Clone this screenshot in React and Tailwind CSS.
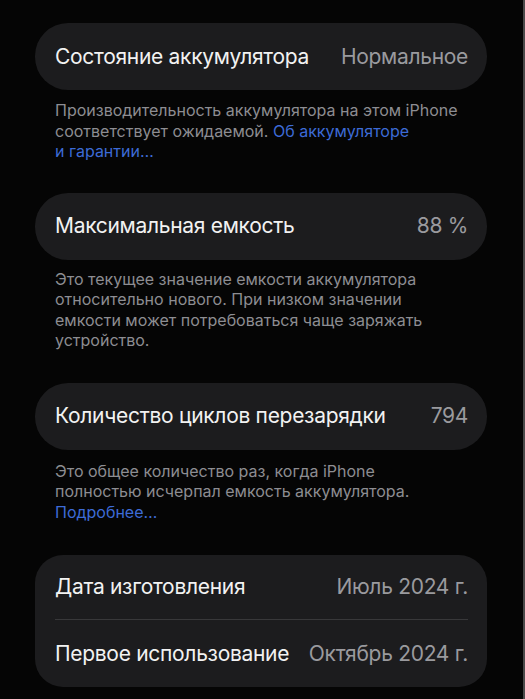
import React from "react";

const font = { fontFamily: "Inter, 'Noto Sans', sans-serif" };

function Card({ label, value }) {
    return (
        <div className="h-[67px] rounded-[33px] bg-[#1c1c1e] pl-5 pr-[19px] flex items-center justify-between">
            <span className="text-[21px] text-[#f2f2f2] tracking-[-0.3px]">{label}</span>
            <span className="text-[21px] text-[#9a9a9e] tracking-[-0.3px]">{value}</span>
        </div>
    );
}

function Note({ children, className = "" }) {
    return (
        <p className={"px-5 text-[16px] leading-[20.5px] text-[#8d8d92] whitespace-nowrap " + className}>{children}</p>
    );
}

export default function App() {
    return (
        <div className="min-h-[699px] w-[525px] bg-[#050505] border-r-2 border-[#4a4a4a] overflow-hidden" style={font}>
            <div className="pl-[35px] pr-[36px] pt-[23px] pb-4">
                <Card label="Состояние аккумулятора" value="Нормальное" />
                <Note className="mt-[10px]">
                    Производительность аккумулятора на этом iPhone
                    <br />
                    соответствует ожидаемой. <span className="text-[#3d6bd6]">Об аккумуляторе</span>
                    <br />
                    <span className="text-[#3d6bd6]">и гарантии…</span>
                </Note>

                <div className="mt-[31px]">
                    <Card label="Максимальная емкость" value="88 %" />
                </div>
                <Note className="mt-[9px]">
                    Это текущее значение емкости аккумулятора
                    <br />
                    относительно нового. При низком значении
                    <br />
                    емкости может потребоваться чаще заряжать
                    <br />
                    устройство.
                </Note>

                <div className="mt-[32px]">
                    <Card label="Количество циклов перезарядки" value="794" />
                </div>
                <Note className="mt-[11px]">
                    Это общее количество раз, когда iPhone
                    <br />
                    полностью исчерпал емкость аккумулятора.
                    <br />
                    <span className="text-[#3d6bd6]">Подробнее…</span>
                </Note>

                <div className="mt-[33px] rounded-[28px] bg-[#1c1c1e] pl-5 pr-[19px]">
                    <div className="h-[64px] flex items-center justify-between">
                        <span className="text-[21px] text-[#f2f2f2] tracking-[-0.3px]">Дата изготовления</span>
                        <span className="text-[21px] text-[#9a9a9e] tracking-[-0.3px]">Июль 2024 г.</span>
                    </div>
                    <div className="h-px bg-[#38383a]" />
                    <div className="h-[67px] flex items-center justify-between">
                        <span className="text-[21px] text-[#f2f2f2] tracking-[-0.3px]">Первое использование</span>
                        <span className="text-[21px] text-[#9a9a9e] tracking-[-0.3px]">Октябрь 2024 г.</span>
                    </div>
                </div>
            </div>
        </div>
    );
}
